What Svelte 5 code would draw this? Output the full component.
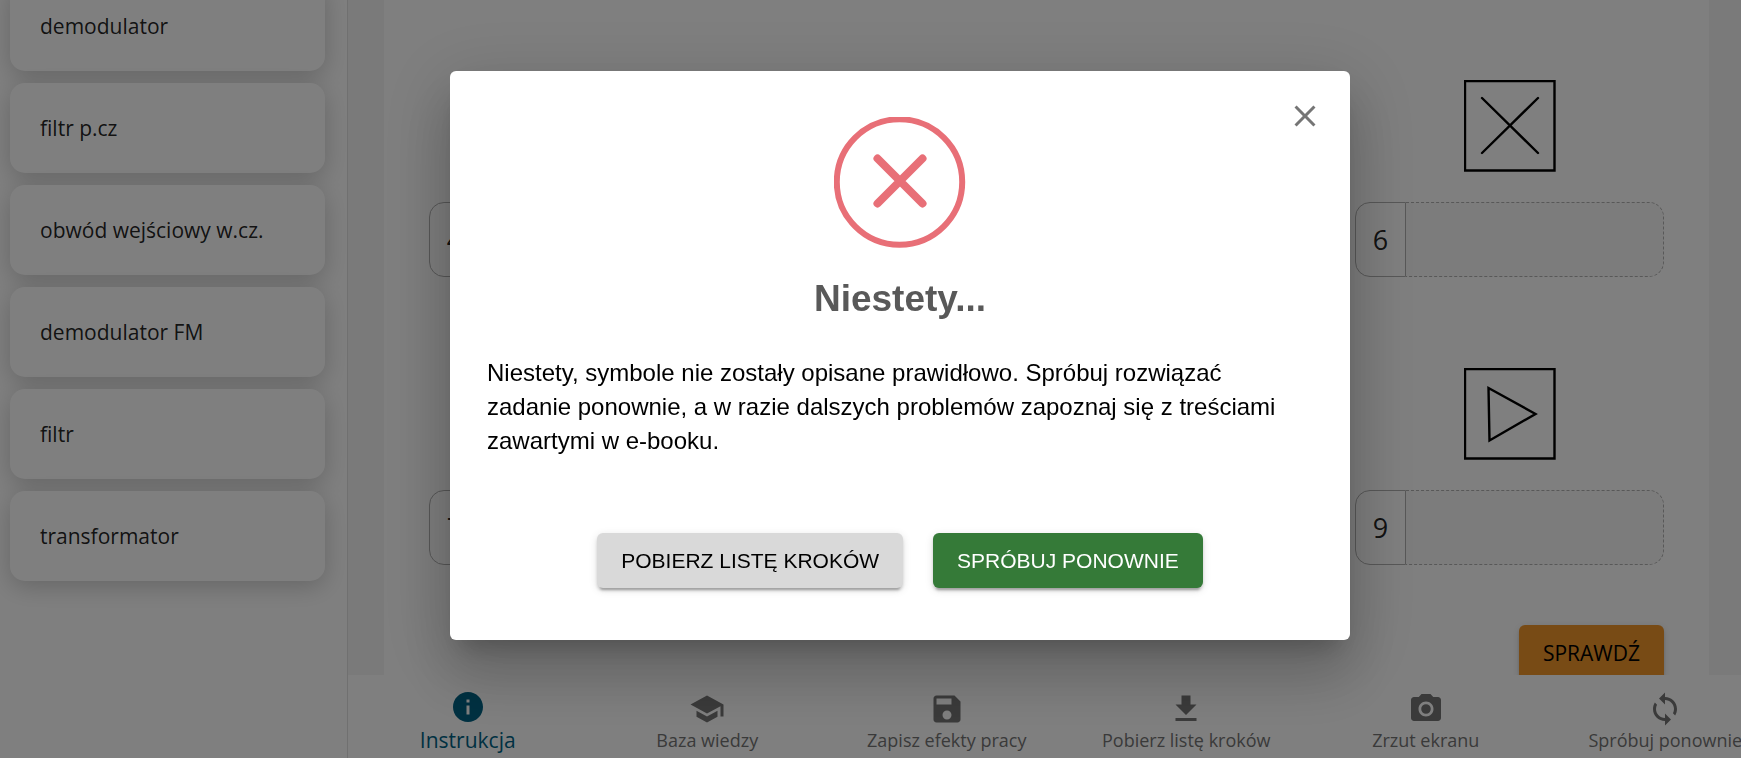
<script lang="ts">
  type Symbol = 'mixer' | 'amplifier';

  const terms: string[] = [
    'demodulator',
    'filtr p.cz',
    'obwód wejściowy w.cz.',
    'demodulator FM',
    'filtr',
    'transformator'
  ];

  const slots: Array<{ id: number; symbol?: Symbol }> = [
    { id: 4 },
    { id: 5 },
    { id: 6, symbol: 'mixer' },
    { id: 7 },
    { id: 8 },
    { id: 9, symbol: 'amplifier' }
  ];

  const actions = [
    {
      label: 'Instrukcja',
      icon: 'M12 2C6.48 2 2 6.48 2 12s4.48 10 10 10 10-4.48 10-10S17.52 2 12 2zm1 15h-2v-6h2v6zm0-8h-2V7h2v2z'
    },
    {
      label: 'Baza wiedzy',
      icon: 'M5 13.18v4L12 21l7-3.82v-4L12 17l-7-3.82zM12 3L1 9l11 6 9-4.91V17h2V9L12 3z'
    },
    {
      label: 'Zapisz efekty pracy',
      icon: 'M17 3H5c-1.11 0-2 .9-2 2v14c0 1.1.89 2 2 2h14c1.1 0 2-.9 2-2V7l-4-4zm-5 16c-1.66 0-3-1.34-3-3s1.34-3 3-3 3 1.34 3 3-1.34 3-3 3zm3-10H5V5h10v4z'
    },
    {
      label: 'Pobierz listę kroków',
      icon: 'M19 9h-4V3H9v6H5l7 7 7-7zM5 18v2h14v-2H5z'
    },
    {
      label: 'Zrzut ekranu',
      icon: 'M12 8.8a3.2 3.2 0 1 0 0 6.4 3.2 3.2 0 1 0 0-6.4zM9 2L7.17 4H4c-1.1 0-2 .9-2 2v12c0 1.1.9 2 2 2h16c1.1 0 2-.9 2-2V6c0-1.1-.9-2-2-2h-3.17L15 2H9zm3 15c-2.76 0-5-2.24-5-5s2.24-5 5-5 5 2.24 5 5-2.24 5-5 5z'
    },
    {
      label: 'Spróbuj ponownie',
      icon: 'M12 4V1L8 5l4 4V6c3.31 0 6 2.69 6 6 0 1.01-.25 1.97-.7 2.8l1.46 1.46C19.54 15.03 20 13.57 20 12c0-4.42-3.58-8-8-8zm0 14c-3.31 0-6-2.69-6-6 0-1.01.25-1.97.7-2.8L5.24 7.74C4.46 8.97 4 10.43 4 12c0 4.42 3.58 8 8 8v3l4-4-4-4v3z'
    }
  ];

  let active = $state(0);
  let open = $state(true);
</script>

<div class="page">
  <aside class="sidebar">
    <ul class="terms">
      {#each terms as term}
        <li class="term" draggable="true">{term}</li>
      {/each}
    </ul>
  </aside>

  <div class="content">
    <main class="board">
      <div class="sheet">
        <div class="slots">
          {#each slots as slot}
            <div class="slot">
              <svg class="symbol" viewBox="0 0 92 92" aria-hidden="true">
                <path d="M1 1H90.500V90.500H1Z" />
                {#if slot.symbol === 'mixer'}
                  <path d="M18 18L74 73M74 18L18 73" />
                {:else if slot.symbol === 'amplifier'}
                  <path d="M24.500 20L71.500 46L25.500 72.500Z" />
                {/if}
              </svg>
              <div class="answer">
                <span class="number">{slot.id}</span>
                <div class="drop"></div>
              </div>
            </div>
          {/each}
        </div>
        <button class="btn check" type="button">SPRAWDŹ</button>
      </div>
    </main>

    <nav class="toolbar">
      {#each actions as action, i}
        <button class="action" class:active={i === active} type="button" onclick={() => (active = i)}>
          <svg viewBox="0 0 24 24" aria-hidden="true"><path d={action.icon} /></svg>
          <span>{action.label}</span>
        </button>
      {/each}
    </nav>
  </div>
</div>

{#if open}
  <div class="overlay">
    <div class="dialog" role="dialog" aria-modal="true" aria-labelledby="dialog-title">
      <button class="close" type="button" aria-label="Zamknij" onclick={() => (open = false)}>
        <svg viewBox="0 0 24 24" aria-hidden="true">
          <path d="M19 6.410L17.590 5 12 10.590 6.410 5 5 6.410 10.590 12 5 17.590 6.410 19 12 13.410 17.590 19 19 17.590 13.410 12z" />
        </svg>
      </button>
      <svg class="status" viewBox="0 0 132 131" aria-hidden="true">
        <circle cx="65.500" cy="65" r="62.700" stroke-width="6" />
        <path d="M43.500 41.500L88.500 86.500M88.500 41.500L43.500 86.500" stroke-width="8" stroke-linecap="round" />
      </svg>
      <h2 id="dialog-title">Niestety...</h2>
      <p>
        Niestety, symbole nie zostały opisane prawidłowo. Spróbuj rozwiązać zadanie ponownie, a w
        razie dalszych problemów zapoznaj się z treściami zawartymi w e-booku.
      </p>
      <div class="dialog-actions">
        <button class="btn secondary" type="button">POBIERZ LISTĘ KROKÓW</button>
        <button class="btn primary" type="button" onclick={() => (open = false)}>SPRÓBUJ PONOWNIE</button>
      </div>
    </div>
  </div>
{/if}

<style>
  :global(body) {
    overflow: hidden;
    background: #fff;
  }

  .page {
    display: flex;
    height: 100vh;
    overflow: hidden;
    font-family: 'Open Sans', 'Noto Sans', sans-serif;
    color: rgba(0, 0, 0, 0.87);
  }

  button {
    font-family: inherit;
    border: 0;
    cursor: pointer;
  }

  .sidebar {
    flex: 0 0 347px;
    border-right: 1px solid #e0e0e0;
    overflow: hidden;
  }

  /* the list is scrolled part of the way down its first entry */
  .terms {
    display: flex;
    flex-direction: column;
    gap: 12px;
    margin: -19px 22px 0 10px;
    padding: 0;
    list-style: none;
  }

  .term {
    display: flex;
    align-items: center;
    height: 90px;
    padding: 0 30px;
    border-radius: 15px;
    background: #fff;
    box-shadow: 0 6px 24px rgba(0, 0, 0, 0.2);
    font-size: 21px;
    cursor: grab;
  }

  .content {
    flex: 1;
    min-width: 0;
    display: flex;
    flex-direction: column;
  }

  .board {
    flex: 1;
    min-height: 0;
    padding: 0 32px 0 36px;
    background: #f4f4f4;
    overflow: hidden;
  }

  .sheet {
    display: flex;
    flex-direction: column;
    gap: 60px;
    padding: 80px 45px 0;
    background: #fff;
  }

  .slots {
    display: grid;
    grid-template-columns: repeat(3, 1fr);
    gap: 91px 154px;
  }

  .slot {
    display: flex;
    flex-direction: column;
    align-items: center;
    gap: 30px;
  }

  .symbol {
    width: 92px;
    height: 92px;
    fill: none;
    stroke: #000;
    stroke-width: 2.4;
    stroke-linecap: round;
  }

  .answer {
    display: flex;
    align-self: stretch;
    height: 75px;
  }

  .number {
    box-sizing: border-box;
    display: flex;
    align-items: center;
    justify-content: center;
    width: 51px;
    border: 1px solid #b0b0b0;
    border-radius: 15px 0 0 15px;
    font-size: 27px;
  }

  .drop {
    flex: 1;
    border: 1px dashed #b0b0b0;
    border-left: 0;
    border-radius: 0 15px 15px 0;
    background: #f9f9f9;
  }

  .btn {
    height: 55px;
    padding: 0 24px;
    border-radius: 6px;
    font-size: 21px;
    box-shadow:
      0 5px 2px -3px rgba(0, 0, 0, 0.2),
      0 3px 3px rgba(0, 0, 0, 0.14),
      0 2px 8px rgba(0, 0, 0, 0.12);
  }

  .check {
    align-self: flex-end;
    background: #f0962a;
    color: #000;
  }

  .toolbar {
    flex: 0 0 83px;
    display: grid;
    grid-template-columns: repeat(6, 1fr);
    margin-right: -44px;
    background: #fff;
  }

  .action {
    display: flex;
    flex-direction: column;
    align-items: center;
    justify-content: flex-end;
    padding: 0 0 4px;
    background: none;
    color: #757575;
    font-size: 18px;
    line-height: 27px;
    white-space: nowrap;
  }

  .action svg {
    width: 36px;
    height: 36px;
    fill: currentColor;
  }

  .action.active {
    padding-bottom: 2px;
    color: #006284;
    font-size: 21px;
    line-height: 31px;
  }

  /* centred on the full page, which runs on past the right edge of the window */
  .overlay {
    position: fixed;
    inset: 0;
    display: flex;
    align-items: flex-start;
    justify-content: center;
    padding: 71px 0 0 59px;
    background: rgba(0, 0, 0, 0.5);
    font-family: 'Liberation Sans', Arial, sans-serif;
  }

  .dialog {
    box-sizing: border-box;
    position: relative;
    display: flex;
    flex-direction: column;
    align-items: center;
    width: 100%;
    max-width: 900px;
    padding: 46px 37px 52px;
    border-radius: 6px;
    background: #fff;
    box-shadow:
      0 17px 23px -11px rgba(0, 0, 0, 0.2),
      0 36px 57px 5px rgba(0, 0, 0, 0.14),
      0 14px 69px 12px rgba(0, 0, 0, 0.12);
  }

  .close {
    position: absolute;
    top: 27px;
    right: 27px;
    padding: 0;
    background: none;
  }

  .close svg {
    display: block;
    width: 36px;
    height: 36px;
    fill: #757575;
  }

  .status {
    width: 132px;
    height: 131px;
    fill: none;
    stroke: #e86f77;
  }

  h2 {
    margin: 29px 0 0;
    color: #595959;
    font-size: 37px;
    line-height: 44px;
  }

  p {
    align-self: stretch;
    margin: 35px 0 0;
    padding-right: 24px;
    font-size: 24px;
    line-height: 34px;
  }

  .dialog-actions {
    display: flex;
    gap: 30px;
    margin-top: 75px;
  }

  .secondary {
    background: #d9d9d9;
    color: #000;
  }

  .primary {
    background: #357a38;
    color: #fff;
  }
</style>
